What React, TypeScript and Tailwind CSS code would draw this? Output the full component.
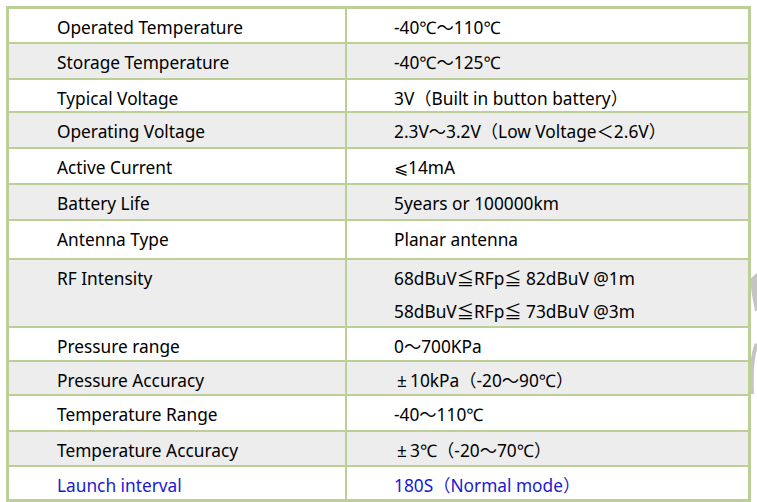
type Row = { label: string; value: React.ReactNode[]; h: string; gray: boolean; blue?: boolean };

// wide ± as in the CJK source font
const PM = () => <span className="inline-block w-[16px] text-center">±</span>;

const rows: Row[] = [
  { label: "Operated Temperature", value: ["-40℃～110℃"], h: "h-[33px]", gray: false },
  { label: "Storage Temperature", value: ["-40℃～125℃"], h: "h-[36px]", gray: true },
  { label: "Typical Voltage", value: ["3V（Built in button battery）"], h: "h-[33px]", gray: false },
  { label: "Operating Voltage", value: ["2.3V～3.2V（Low Voltage＜2.6V）"], h: "h-[36px]", gray: true },
  { label: "Active Current", value: ["⩽14mA"], h: "h-[36px]", gray: false },
  { label: "Battery Life", value: ["5years or 100000km"], h: "h-[36px]", gray: true },
  { label: "Antenna Type", value: ["Planar antenna"], h: "h-[39px]", gray: false },
  {
    label: "RF Intensity",
    value: ["68dBuV≦RFp≦ 82dBuV @1m", "58dBuV≦RFp≦ 73dBuV @3m"],
    h: "h-[68px]",
    gray: true,
  },
  { label: "Pressure range", value: ["0～700KPa"], h: "h-[34px]", gray: false },
  { label: "Pressure Accuracy", value: [<><PM />10kPa（-20～90℃）</>], h: "h-[34px]", gray: true },
  { label: "Temperature Range", value: ["-40～110℃"], h: "h-[36px]", gray: false },
  { label: "Temperature Accuracy", value: [<><PM />3℃（-20～70℃）</>], h: "h-[35px]", gray: true },
  { label: "Launch interval", value: ["180S（Normal mode）"], h: "h-[34px]", gray: false, blue: true },
];

export default function App() {
  return (
    <div
      className="relative w-[757px] h-[502px] overflow-hidden bg-white text-[17.3px] leading-[20px]"
      style={{ fontFamily: '"Noto Sans", "Noto Sans CJK SC", sans-serif' }}
    >
      {/* watermark fragments peeking out on the right */}
      <svg className="absolute left-[749px] top-[270px]" width="8" height="130" viewBox="0 0 8 130">
        <path d="M1 9 L8 3 L8 41 L6 41 C4 31 2 20 1 9 Z" fill="#c4c4c4" />
        <path d="M8 74 C3 84 2 100 3 124" fill="none" stroke="#c4c4c4" strokeWidth="4" />
      </svg>

      <div className="relative ml-[6px] mt-[6px] w-[745px] border-[3px] border-[#bccf96]">
        {rows.map((r, i) => (
          <div
            key={r.label}
            className={`flex ${r.h} ${i > 0 ? "border-t-2 border-[#bccf96]" : ""} ${r.gray ? "bg-[#ededed]" : "bg-white"} ${r.blue ? "text-[#1a1ad2]" : "text-black"}`}
          >
            <div className="w-[336px] pl-[48px] pt-[9px]">{r.label}</div>
            <div className="flex-1 border-l-2 border-[#bccf96] pl-[47px] pt-[9px]">
              {r.value.map((v, j) => (
                <div key={j} className={j > 0 ? "mt-[13px]" : ""}>
                  {v}
                </div>
              ))}
            </div>
          </div>
        ))}
      </div>
    </div>
  );
}
